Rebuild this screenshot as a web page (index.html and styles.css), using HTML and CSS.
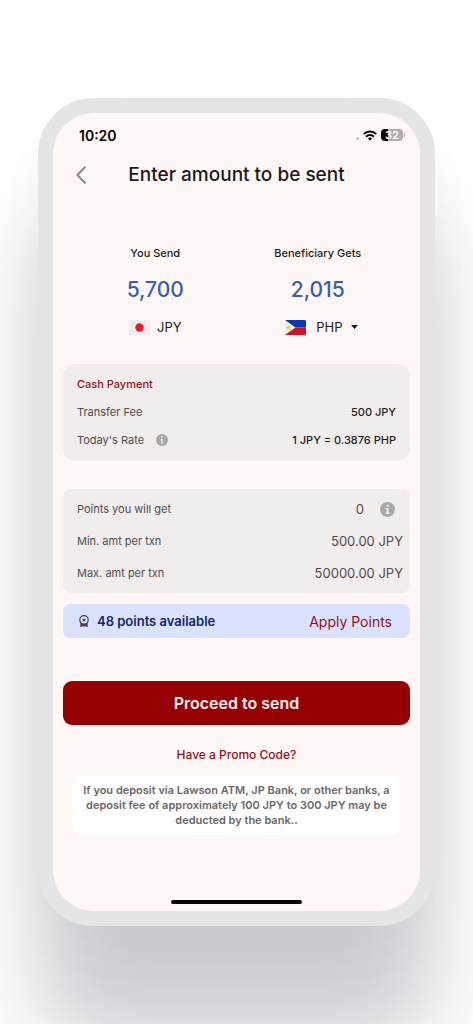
FILE: index.html
```html
<!DOCTYPE html>
<html lang="en">
<head>
<meta charset="utf-8">
<meta name="viewport" content="width=device-width, initial-scale=1">
<title>Enter amount to be sent</title>
<link rel="stylesheet" href="styles.css">
</head>
<body>
<div class="phone">
  <div class="status-bar">
    <time class="clock">10:20</time>
    <div class="status-icons">
      <span class="signal-dot"></span>
      <svg class="wifi" viewBox="0 0 14 11" aria-hidden="true">
        <g fill="none" stroke="#000" stroke-width="2">
          <path d="M.8 4.1a8.8 8.8 0 0 1 12.4 0"/>
          <path d="M3.1 6.7a5.6 5.6 0 0 1 7.8 0"/>
        </g>
        <path d="M7 10.8 4.9 8.6a3 3 0 0 1 4.2 0z"/>
      </svg>
      <span class="battery"><span class="battery-body">32</span><span class="battery-tip"></span></span>
    </div>
  </div>

  <header class="header">
    <button class="back" type="button" aria-label="Back">
      <svg viewBox="0 0 10 18" aria-hidden="true"><path d="M8.9 1.3 1.4 9l7.5 7.7" fill="none" stroke="#8c8888" stroke-width="2" stroke-linecap="round" stroke-linejoin="round"/></svg>
    </button>
    <h1 class="title">Enter amount to be sent</h1>
  </header>

  <main class="content">
    <section class="exchange">
      <div class="side">
        <label class="side-label" for="send">You Send</label>
        <input class="amount" id="send" type="text" inputmode="numeric" value="5,700">
        <div class="currency">
          <svg class="flag" viewBox="0 0 21 15" aria-hidden="true"><rect width="21" height="15" rx="1" fill="#eee"/><circle cx="10.5" cy="7.5" r="4.2" fill="#ed1b2f"/></svg>
          <span>JPY</span>
        </div>
      </div>
      <div class="side">
        <label class="side-label" for="receive">Beneficiary Gets</label>
        <input class="amount" id="receive" type="text" inputmode="numeric" value="2,015">
        <div class="currency currency-pick">
          <svg class="flag" viewBox="0 0 21 15" aria-hidden="true"><path d="M0 0h20l1 1v6.5H0z" fill="#0a3aa9"/><path d="M0 7.500h21V14l-1 1H0z" fill="#ce1126"/><path d="M0 0l10.500 7.500L0 15z" fill="#f1f0ee"/><circle cx="3.600" cy="7.500" r="1.900" fill="#f7d038"/><path d="M3.600 4.600v5.800M.8 7.500h5.600M1.600 5.500l4 4M5.600 5.500l-4 4" stroke="#f7d038" stroke-width=".7"/></svg>
          <span class="select-wrap">
            <select class="select" aria-label="Beneficiary currency"><option>PHP</option></select>
            <svg class="caret" viewBox="0 0 7 4" aria-hidden="true"><path d="M0 0h7L3.500 4z" fill="#1d1a1a"/></svg>
          </span>
        </div>
      </div>
    </section>

    <section class="card card-fees">
      <h2 class="card-title">Cash Payment</h2>
      <div class="row"><span>Transfer Fee</span><span class="strong">500 JPY</span></div>
      <div class="row">
        <span class="with-info">Today's Rate
          <button class="info" type="button" aria-label="About today's rate"><svg viewBox="0 0 16 16" aria-hidden="true"><circle cx="8" cy="8" r="8" fill="#a9a7a7"/><path d="M6.900 3h2.200v2H6.900zM5.900 6.500h3.200v5h1.100v1.300H5.900v-1.300H7V7.800H5.900z" fill="#f0edec"/></svg></button>
        </span>
        <span class="strong">1 JPY = 0.3876 PHP</span>
      </div>
    </section>

    <section class="card card-points">
      <div class="row">
        <span>Points you will get</span>
        <span class="value value-info">0
          <button class="info info-large" type="button" aria-label="About points"><svg viewBox="0 0 16 16" aria-hidden="true"><circle cx="8" cy="8" r="8" fill="#a9a7a7"/><path d="M6.900 3h2.200v2H6.900zM5.900 6.500h3.200v5h1.100v1.300H5.900v-1.300H7V7.800H5.900z" fill="#f0edec"/></svg></button>
        </span>
      </div>
      <div class="row"><span>Min. amt per txn</span><span class="value">500.00 JPY</span></div>
      <div class="row"><span>Max. amt per txn</span><span class="value">50000.00 JPY</span></div>
    </section>

    <section class="points-bar">
      <svg class="medal" viewBox="0 0 10 12" aria-hidden="true">
        <path d="M1.300 7.500h7.400V12L5 11.300 1.300 12z" fill="#4a4245"/>
        <circle cx="5" cy="4.900" r="4.200" fill="#d9e2ff" stroke="#4a4245" stroke-width="1.300"/>
        <path d="m5 2.800.6 1.400 1.500.1-1.100 1 .3 1.500L5 6l-1.300.8.3-1.500-1.100-1 1.500-.1z" fill="#4a4245"/>
      </svg>
      <span class="points-text">48 points available</span>
      <button class="apply" type="button">Apply Points</button>
    </section>

    <button class="proceed" type="button">Proceed to send</button>
    <a class="promo" href="#promo">Have a Promo Code?</a>
    <p class="note">If you deposit via Lawson ATM, JP Bank, or other banks, a deposit fee of approximately 100 JPY to 300 JPY may be deducted by the bank..</p>
  </main>
  <div class="home-indicator"></div>
</div>
</body>
</html>
```

FILE: styles.css
```css
* {
  box-sizing: border-box;
}

body {
  margin: 0;
  padding: 98px 38px;
  background: #fff;
  color: #1d1a1a;
  font-family: Inter, "Liberation Sans", sans-serif;
  overflow-x: hidden;
}

button,
input,
select {
  font: inherit;
  color: inherit;
  padding: 0;
  margin: 0;
  border: 0;
  background: none;
}

button {
  cursor: pointer;
}

svg {
  display: block;
}

.phone {
  max-width: 480px;
  margin: 0 auto;
  border: 15px solid #e5e5e5;
  border-radius: 56px;
  background: #fff7f5;
  box-shadow: 0 116px 84px rgba(39, 55, 75, 0.24), 0 10px 80px rgba(39, 55, 75, 0.03);
}

.status-bar {
  display: flex;
  align-items: center;
  justify-content: space-between;
  height: 44px;
  padding: 0 15px 0 26px;
}

.clock {
  font-size: 14px;
  font-weight: 600;
  color: #000;
}

.status-icons {
  display: flex;
  align-items: center;
  gap: 4px;
}

.signal-dot {
  width: 3px;
  height: 3px;
  margin-top: 7px;
  border-radius: 50%;
  background: #c4bfbe;
}

.wifi {
  width: 14px;
  height: 11px;
}

.battery {
  display: flex;
  align-items: center;
  gap: 1px;
}

.battery-body {
  width: 22px;
  border-radius: 4px;
  background: linear-gradient(90deg, #000 32%, #b5adad 32%);
  color: #fff;
  font-size: 11px;
  font-weight: 600;
  line-height: 12px;
  text-align: center;
}

.battery-tip {
  width: 1px;
  height: 4px;
  background: #b5adad;
}

.header {
  display: grid;
  grid-template-columns: 32px 1fr 32px;
  align-items: center;
  height: 36px;
  padding: 0 12px;
}

.back {
  display: grid;
  place-items: center;
  height: 32px;
}

.back svg {
  width: 10px;
  height: 18px;
}

.title {
  margin: 0;
  font-size: 19px;
  font-weight: 500;
  line-height: 24px;
  text-align: center;
  white-space: nowrap;
}

.content {
  display: flex;
  flex-direction: column;
  padding: 52px 10px 0;
}

.exchange {
  display: grid;
  grid-template-columns: 1fr 1fr;
  padding: 0 11px;
  margin-bottom: 27px;
}

.side {
  display: flex;
  flex-direction: column;
  align-items: center;
}

.side-label {
  font-size: 11px;
  font-weight: 500;
  line-height: 16px;
}

.amount {
  width: 100%;
  height: 28px;
  margin: 14px 0;
  color: #3460ae;
  font-size: 21px;
  font-weight: 500;
  text-align: center;
}

.currency {
  display: flex;
  align-items: center;
  gap: 7px;
  height: 20px;
  font-size: 13px;
}

.currency-pick {
  gap: 10px;
  padding-left: 8px;
}

.flag {
  width: 21px;
  height: 15px;
}

.select-wrap {
  display: grid;
  align-items: center;
}

.select {
  grid-area: 1 / 1;
  appearance: none;
  padding-right: 15px;
}

.caret {
  grid-area: 1 / 1;
  justify-self: end;
  width: 7px;
  height: 4px;
  pointer-events: none;
}

.card {
  display: flex;
  flex-direction: column;
  background: #f0edec;
  color: #544c4c;
  font-size: 11px;
}

.card-fees {
  gap: 12px;
  margin-bottom: 28px;
  padding: 12px 14px 13px;
  border-radius: 12px;
}

.card-points {
  gap: 16px;
  margin-bottom: 11px;
  padding: 12px 7px 12px 14px;
  border-radius: 8px;
}

.card-title {
  margin: 0;
  color: #960f18;
  font-size: 11px;
  font-weight: 500;
  line-height: 16px;
}

.row {
  display: flex;
  align-items: center;
  justify-content: space-between;
  height: 16px;
}

.strong {
  color: #1d1a1a;
  font-weight: 500;
}

.with-info {
  display: flex;
  align-items: center;
  gap: 12px;
}

.value {
  font-size: 13px;
}

.value-info {
  display: flex;
  align-items: center;
  gap: 16px;
  padding-right: 8px;
}

.info svg {
  width: 12px;
  height: 12px;
}

.info-large svg {
  width: 15px;
  height: 15px;
}

.points-bar {
  display: flex;
  align-items: center;
  height: 34px;
  margin-bottom: 43px;
  padding: 0 18px 0 16px;
  border-radius: 7px;
  background: #d9e2ff;
}

.medal {
  width: 10px;
  height: 12px;
}

.points-text {
  margin-left: 8px;
  color: #14256b;
  font-size: 13px;
  font-weight: 600;
}

.apply {
  margin-left: auto;
  color: #960f18;
  font-size: 14px;
}

.proceed {
  height: 44px;
  margin-bottom: 22px;
  border-radius: 9px;
  background: #950000;
  color: #fff3f0;
  font-size: 16px;
  font-weight: 600;
}

.promo {
  align-self: center;
  margin-bottom: 13px;
  color: #960f18;
  font-size: 12px;
  font-weight: 500;
  line-height: 16px;
  text-decoration: none;
}

.note {
  margin: 0 10px;
  padding: 7px;
  border-radius: 8px;
  background: #fff;
  color: #6b6767;
  font-size: 11px;
  font-weight: 600;
  line-height: 15px;
  text-align: center;
}

.home-indicator {
  width: 131px;
  height: 4px;
  margin: 65px auto 7px;
  border-radius: 2px;
  background: #000;
}
```
